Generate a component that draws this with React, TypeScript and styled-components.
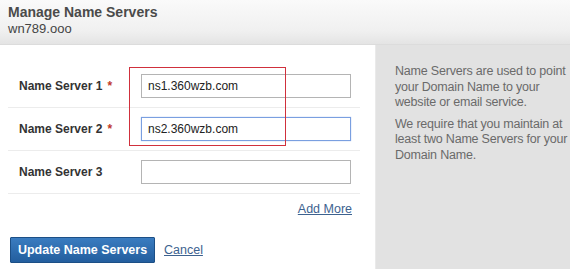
import React, { useState } from 'react'
import styled, { createGlobalStyle } from 'styled-components'

const GlobalStyle = createGlobalStyle`
  html, body {
    margin: 0;
    padding: 0;
    background: #fff;
    font-family: 'Liberation Sans', Arial, sans-serif;
  }
`

const servers = [
  { label: 'Name Server 1', value: 'ns1.360wzb.com', required: true },
  { label: 'Name Server 2', value: 'ns2.360wzb.com', required: true, focused: true },
  { label: 'Name Server 3', value: '', required: false },
]

const App = () => {
  const [values, setValues] = useState<string[]>(servers.map((s) => s.value))

  const onChangeValue = (index: number) => (event: React.ChangeEvent<HTMLInputElement>) => {
    const next = [...values]
    next[index] = event.target.value
    setValues(next)
  }

  return (
    <Page>
      <GlobalStyle />
      <Header>
        <Title>Manage Name Servers</Title>
        <Domain>wn789.ooo</Domain>
      </Header>
      <Body>
        <FormPanel>
          <Highlight />
          {servers.map((server, i) => (
            <Row key={server.label}>
              <Label htmlFor={`ns${i}`}>
                {server.label}
                {server.required && <Star>*</Star>}
              </Label>
              <Input id={`ns${i}`} $focused={server.focused} value={values[i]} onChange={onChangeValue(i)} />
            </Row>
          ))}
          <AddMoreRow>
            <LinkText href="#">Add More</LinkText>
          </AddMoreRow>
          <Actions>
            <SubmitButton type="button">Update Name Servers</SubmitButton>
            <LinkText href="#">Cancel</LinkText>
          </Actions>
        </FormPanel>
        <HelpPanel>
          <HelpText>
            Name Servers are used to point<br />
            your Domain Name to your<br />
            website or email service.
          </HelpText>
          <HelpText>
            We require that you maintain at<br />
            least two Name Servers for your<br />
            Domain Name.
          </HelpText>
        </HelpPanel>
      </Body>
    </Page>
  )
}

export default App

const Page = styled.div`
  width: 570px;
  height: 269px;
  overflow: hidden;
`

const Header = styled.header`
  height: 45px;
  box-sizing: border-box;
  padding: 4px 8px 0;
  background: linear-gradient(#fafafa, #f0f0f0 70%, #e4e4e4);
  border-bottom: 1px solid #dcdcdc;
`

const Title = styled.h1`
  margin: 0;
  font-size: 14px;
  font-weight: bold;
  color: #4a4a4a;
  line-height: 17px;
`

const Domain = styled.div`
  font-size: 13px;
  color: #444;
  line-height: 16px;
`

const Body = styled.div`
  display: flex;
  height: 224px;
`

const FormPanel = styled.section`
  position: relative;
  width: 375px;
  box-sizing: border-box;
  padding: 20px 15px 0 8px;
  background: #fff;
`

// red annotation box drawn over the first two inputs
const Highlight = styled.div`
  position: absolute;
  z-index: 2;
  left: 129px;
  top: 22px;
  width: 157px;
  height: 79px;
  box-sizing: border-box;
  border: 1px solid #d0303c;
  pointer-events: none;
`

const Row = styled.div`
  display: flex;
  align-items: center;
  height: 42px;
  padding: 0 0 0 11px;
  border-bottom: 1px solid #ececec;
  &:first-of-type {
    height: 41px;
    margin-top: -1px;
  }
`

const Label = styled.label`
  width: 122px;
  font-size: 12px;
  font-weight: bold;
  color: #333;
`

const Star = styled.span`
  color: #c0392b;
  margin-left: 5px;
`

const Input = styled.input<{ $focused?: boolean }>`
  width: 210px;
  height: 24px;
  box-sizing: border-box;
  padding: 0 6px;
  font-family: 'Liberation Sans', Arial, sans-serif;
  font-size: 12px;
  color: #222;
  outline: none;
  border: 1px solid ${(p) => (p.$focused ? '#7a9fe0' : '#b4b4b4')};
  box-shadow: ${(p) => (p.$focused ? '0 0 1px #9ab8ee' : 'none')};
`

const AddMoreRow = styled.div`
  display: flex;
  justify-content: flex-end;
  padding: 8px 8px 0 0;
  height: 43px;
  box-sizing: border-box;
`

const Actions = styled.div`
  display: flex;
  align-items: center;
  gap: 9px;
  padding-left: 2px;
`

const LinkText = styled.a`
  font-size: 12.5px;
  color: #3d628f;
  text-decoration: underline;
`

const SubmitButton = styled.button`
  height: 26px;
  width: 145px;
  padding: 0;
  border: 1px solid #1c4f86;
  border-radius: 1px;
  background: linear-gradient(#3a7cc0, #235e9e);
  color: #fff;
  font-family: 'Liberation Sans', Arial, sans-serif;
  font-size: 12.5px;
  font-weight: bold;
`

const HelpPanel = styled.aside`
  flex: 1;
  padding: 19px 0 0 19px;
  background: #e2e2e2;
  border-left: 1px solid #eaeaea;
`

const HelpText = styled.p`
  margin: 0 0 6px;
  font-size: 12.5px;
  line-height: 15.5px;
  letter-spacing: -0.2px;
  white-space: nowrap;
  color: #6a6a6a;
`
